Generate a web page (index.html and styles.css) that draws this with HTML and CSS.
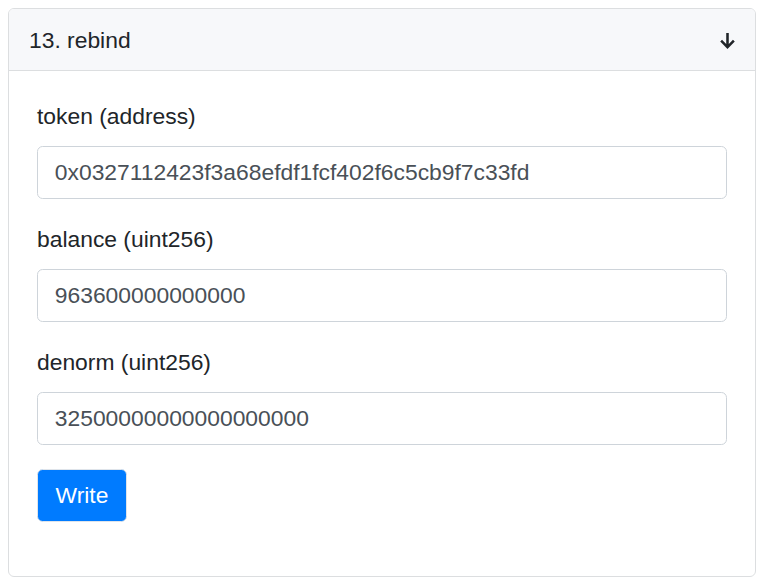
FILE: index.html
```html
<!DOCTYPE html>
<html lang="en">
<head>
<meta charset="utf-8">
<title>13. rebind</title>
<link rel="stylesheet" href="styles.css">
</head>
<body>
<div class="card">
  <div class="card-header">
    <span class="card-title">13. rebind</span>
    <svg class="arrow" width="17" height="17" viewBox="0 0 16 16" aria-hidden="true">
      <path d="M8 1V14M2 8.2L8 14.2L14 8.2" fill="none" stroke="#212529" stroke-width="2.4" stroke-linecap="butt" stroke-linejoin="miter"/>
    </svg>
  </div>
  <div class="card-body">
    <div class="form-group">
      <label class="form-label">token (address)</label>
      <input class="form-control" type="text" value="0x0327112423f3a68efdf1fcf402f6c5cb9f7c33fd">
    </div>
    <div class="form-group">
      <label class="form-label">balance (uint256)</label>
      <input class="form-control" type="text" value="963600000000000">
    </div>
    <div class="form-group">
      <label class="form-label">denorm (uint256)</label>
      <input class="form-control" type="text" value="32500000000000000000">
    </div>
    <button class="btn-write" type="button">Write</button>
  </div>
</div>
</body>
</html>
```
FILE: styles.css
```css
* { box-sizing: border-box; }

body {
  margin: 8px;
  background: #ffffff;
  font-family: "Liberation Sans", Arial, sans-serif;
  font-size: 22.85px;
  color: #212529;
}

.card {
  border: 1px solid #dcdee0;
  border-radius: 6px;
  background: #ffffff;
  overflow: hidden;
}

.card-header {
  height: 62px;
  display: flex;
  align-items: center;
  justify-content: space-between;
  padding: 2px 19px 0 20px;
  background: #f7f8fa;
  border-bottom: 1px solid #dcdee0;
  line-height: 33.6px;
}

.card-title { color: #212529; }

.arrow { display: block; margin-top: -1px; }

.card-body {
  padding: 29px 28px 53.5px 28px;
}

.form-group {
  margin-bottom: 23.8px;
}

.form-label {
  display: block;
  line-height: 33.6px;
  margin-bottom: 12.5px;
  color: #212529;
}

.form-control {
  display: block;
  width: 100%;
  height: 53px;
  padding: 0 16.8px;
  font-family: inherit;
  font-size: 22.85px;
  line-height: 33.6px;
  color: #495057;
  background: #ffffff;
  border: 1px solid #ced4da;
  border-radius: 5.6px;
  outline: none;
}

.btn-write {
  display: block;
  height: 53.6px;
  padding: 0 17.5px;
  font-family: inherit;
  font-size: 22.85px;
  line-height: 33.6px;
  color: #ffffff;
  background: #007bff;
  border: 1px solid #dfe4ea;
  border-radius: 5.6px;
  cursor: pointer;
}
```
